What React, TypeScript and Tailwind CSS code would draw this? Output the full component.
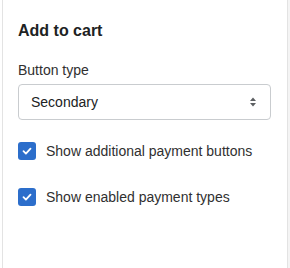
import { useState } from "react";

function CheckRow({ label, checked, onToggle }: { label: string; checked: boolean; onToggle: () => void }) {
  return (
    <label className="flex cursor-pointer items-center gap-[10px]" onClick={onToggle}>
      <span
        className={
          checked
            ? "flex h-[18px] w-[18px] items-center justify-center rounded-[3px] bg-[#2c6ecb]"
            : "flex h-[18px] w-[18px] items-center justify-center rounded-[3px] border border-[#8c9196] bg-white"
        }
      >
        {checked && (
          <svg className="h-[12px] w-[12px]" viewBox="0 0 12 12" fill="none">
            <path d="M2.5 6.2l2.4 2.4 4.6-5" stroke="white" strokeWidth={1.8} strokeLinecap="round" strokeLinejoin="round" />
          </svg>
        )}
      </span>
      <span className="text-[14px] leading-5 text-[#303030]">{label}</span>
    </label>
  );
}

export default function App() {
  const [type, setType] = useState("Secondary");
  const [additional, setAdditional] = useState(true);
  const [enabled, setEnabled] = useState(true);

  return (
    <div className="flex h-[268px] w-[290px] bg-white font-['Liberation_Sans',Arial,sans-serif]">
      <div className="w-[2px]" />
      <div className="w-[286px] border-x border-[#e3e3e3] px-[15px] pt-[21px]">
        <h2 className="text-[16px] font-bold leading-5 text-[#202223]">Add to cart</h2>

        <div className="mt-[19px] text-[14px] leading-5 text-[#303030]">Button type</div>
        <div className="relative mt-[4px] h-9 w-[253px]">
          <select
            value={type}
            onChange={(e) => setType(e.target.value)}
            className="h-9 w-full appearance-none rounded-[4px] border border-[#c9cccf] bg-white pl-[12px] text-[14px] text-[#202223] outline-none"
          >
            <option>Primary</option>
            <option>Secondary</option>
          </select>
          <svg
            className="pointer-events-none absolute right-[14px] top-1/2 h-[12px] w-[8px] -translate-y-1/2"
            viewBox="0 0 8 12"
            fill="#5c5f62"
          >
            <path d="M4 1.5L7 5H1z" />
            <path d="M4 10.5L1 7h6z" />
          </svg>
        </div>

        <div className="mt-[21px] flex flex-col gap-[26px]">
          <CheckRow label="Show additional payment buttons" checked={additional} onToggle={() => setAdditional(!additional)} />
          <CheckRow label="Show enabled payment types" checked={enabled} onToggle={() => setEnabled(!enabled)} />
        </div>
      </div>
      <div className="flex-1 bg-[#f4f4f4]" />
    </div>
  );
}
